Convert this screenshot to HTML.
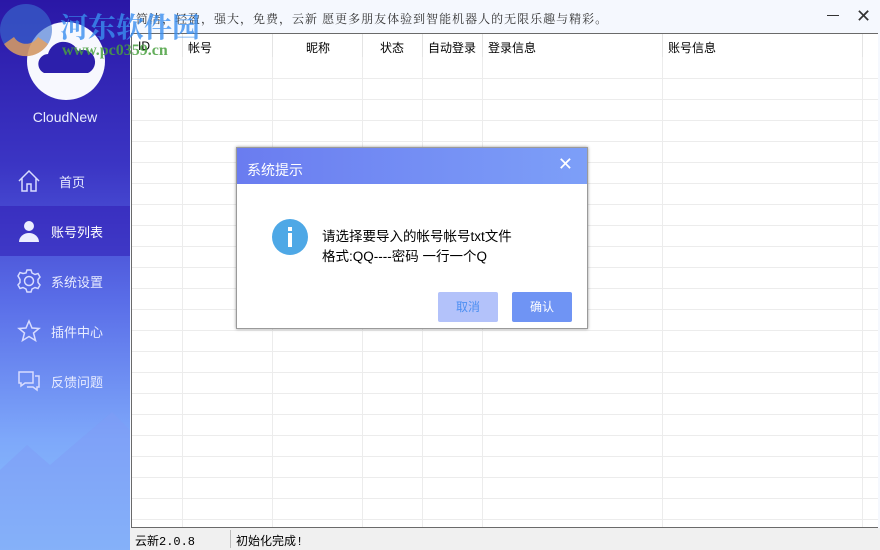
<!DOCTYPE html>
<html><head><meta charset="utf-8"><style>
*{margin:0;padding:0;box-sizing:border-box}
body{width:880px;height:550px;overflow:hidden;position:relative;background:#f5f8fe;font-family:"Liberation Sans","Noto Sans CJK SC",sans-serif;font-size:12px;color:#000}
.side{position:absolute;left:0;top:0;width:130px;height:550px;background:linear-gradient(#2a17a6 0%,#3b35c4 30%,#5a6ee8 55%,#7ea8fa 80%,#8ac6fd 100%);overflow:hidden}
.it{position:absolute;left:0;width:130px;height:50px;color:#e8ecff;font-size:13px}
.it span{position:absolute;left:51px;top:16px}
.it svg{position:absolute;left:17px;top:13px}
.sel{background:rgba(50,30,180,0.55)}
.top{position:absolute;left:130px;top:0;width:750px;height:33px;background:#f5f8fe}
.grid{position:absolute;left:131px;top:33px;width:747px;height:495px;border:1px solid #6a6a6a;border-right:none;background:#fff}
.hl{position:absolute;left:0;right:0;height:1px;background:#ececec}
.vl{position:absolute;top:0;bottom:0;width:1px;background:#ececec}
.hd{position:absolute;top:5px;font-size:12px}
.status{position:absolute;left:130px;top:528px;width:750px;height:22px;background:#f0f0f0;font-family:"Liberation Mono","Noto Sans CJK SC",monospace;font-size:12px}
.dlg{position:absolute;left:236px;top:147px;width:352px;height:182px;background:#fff;border:1px solid #9a9a9a;box-shadow:0 0 3px rgba(0,0,0,0.4)}
.dh{height:36px;background:linear-gradient(90deg,#6a7cf0,#7d9ff8);color:#fff;font-size:14px;padding:12px 0 0 10px}
.btn{position:absolute;top:144px;width:60px;height:30px;border-radius:2px;font-size:12px;text-align:center;line-height:30px}
</style></head><body>
<div class="side">
  <svg width="130" height="140" style="position:absolute;left:0;top:0">
    <circle cx="66" cy="61" r="39" fill="#f7f8fe"/>
    <path d="M44 73 a10 10 0 0 1 4 -19 a16 16 0 0 1 30 -3 a11 11 0 0 1 10 22 z" fill="#2c1fab"/>
    <circle cx="26" cy="30" r="26" fill="#3a6fd0" opacity="0.6"/>
    <path d="M4 44 a26 26 0 0 0 44 0 l-10 -7 a14 14 0 0 1 -24 0z" fill="#f0a050" opacity="0.75"/>
  </svg>
  <div style="position:absolute;left:0;width:130px;top:109px;text-align:center;color:#e8ecff;font-size:14px">CloudNew</div>
  <div class="it" style="top:156px"><svg width="24" height="24" viewBox="0 0 24 24" fill="none" stroke="#d8dcff" stroke-width="1.5"><path d="M2 12 L12 2 L22 12 M5 9 V22 H10 V15 H14 V22 H19 V9"/></svg><span style="left:59px">首页</span></div>
  <div class="it sel" style="top:206px"><svg width="24" height="24" viewBox="0 0 24 24"><circle cx="12" cy="7" r="5" fill="#eceeff"/><path d="M2 23 a10 9 0 0 1 20 0z" fill="#eceeff"/></svg><span style="color:#fff">账号列表</span></div>
  <div class="it" style="top:256px"><svg width="24" height="24" viewBox="0 0 24 24" fill="none" stroke="#d8dcff" stroke-width="1.5"><path d="M10 1h4l1 3 3 1.5 3-1 2 3.5-2 2.5v3l2 2.5-2 3.5-3-1-3 1.5-1 3h-4l-1-3-3-1.5-3 1-2-3.5 2-2.5v-3L1 7l2-3.5 3 1L9 4z"/><circle cx="12" cy="12" r="4.5"/></svg><span>系统设置</span></div>
  <div class="it" style="top:306px"><svg width="24" height="24" viewBox="0 0 24 24" fill="none" stroke="#d8dcff" stroke-width="1.5"><path d="M12 2l3 7 7 .5-5.5 4.5 2 7.5L12 17.5 5.5 21.5l2-7.5L2 9.5 9 9z"/></svg><span>插件中心</span></div>
  <div class="it" style="top:356px"><svg width="24" height="24" viewBox="0 0 24 24" fill="none" stroke="#d8dcff" stroke-width="1.5"><path d="M2 3h14v11H8l-4 3v-3H2z M18 7h4v11h-2v3l-4-3h-6"/></svg><span>反馈问题</span></div>
  <svg width="130" height="200" style="position:absolute;left:0;top:350px"><path d="M0 120 L27 95 L50 115 L112 62 L130 80 V200 H0z" fill="#7f9cf6" opacity="0.5"/></svg>
</div>
<div class="top">
  <div style="position:absolute;left:6px;top:10px;font-size:12px;color:#333;font-family:'Noto Serif CJK SC',serif;letter-spacing:1px">简洁，轻盈，强大，免费，云新 愿更多朋友体验到智能机器人的无限乐趣与精彩。</div>
  <div style="position:absolute;left:697px;top:15px;width:12px;height:1px;background:#333"></div>
  <div style="position:absolute;left:726px;top:6px;font-size:18px;color:#333">✕</div>
</div>
<div class="grid">
  <div class="vl" style="left:50px"></div><div class="vl" style="left:140px"></div><div class="vl" style="left:230px"></div><div class="vl" style="left:290px"></div><div class="vl" style="left:350px"></div><div class="vl" style="left:530px"></div><div class="vl" style="left:730px"></div>
  <div style="position:absolute;left:0;right:0;top:0;height:23px;background:#fff"></div>
  <div class="vl" style="left:50px;height:23px;background:#e4e4e4"></div><div class="vl" style="left:140px;height:23px;background:#e4e4e4"></div><div class="vl" style="left:230px;height:23px;background:#e4e4e4"></div><div class="vl" style="left:290px;height:23px;background:#e4e4e4"></div><div class="vl" style="left:350px;height:23px;background:#e4e4e4"></div><div class="vl" style="left:530px;height:23px;background:#e4e4e4"></div><div class="vl" style="left:730px;height:23px;background:#e4e4e4"></div>
  <div class="hd" style="left:6px">ID</div><div class="hd" style="left:56px">帐号</div><div class="hd" style="left:174px">昵称</div><div class="hd" style="left:248px">状态</div><div class="hd" style="left:296px">自动登录</div><div class="hd" style="left:356px">登录信息</div><div class="hd" style="left:536px">账号信息</div>
  <div class="hl" style="top:44px"></div><div class="hl" style="top:65px"></div><div class="hl" style="top:86px"></div><div class="hl" style="top:107px"></div><div class="hl" style="top:128px"></div><div class="hl" style="top:149px"></div><div class="hl" style="top:170px"></div><div class="hl" style="top:191px"></div><div class="hl" style="top:212px"></div><div class="hl" style="top:233px"></div><div class="hl" style="top:254px"></div><div class="hl" style="top:275px"></div><div class="hl" style="top:296px"></div><div class="hl" style="top:317px"></div><div class="hl" style="top:338px"></div><div class="hl" style="top:359px"></div><div class="hl" style="top:380px"></div><div class="hl" style="top:401px"></div><div class="hl" style="top:422px"></div><div class="hl" style="top:443px"></div><div class="hl" style="top:464px"></div><div class="hl" style="top:485px"></div>
</div>
<div class="status"><span style="position:absolute;left:5px;top:4px">云新2.0.8</span><div style="position:absolute;left:100px;top:2px;width:1px;height:18px;background:#bbb"></div><span style="position:absolute;left:106px;top:4px">初始化完成!</span></div>
<div class="dlg">
  <div class="dh">系统提示</div>
  <div style="position:absolute;right:14px;top:6px;color:#fff;font-size:18px">✕</div>
  <svg width="38" height="38" style="position:absolute;left:34px;top:70px"><circle cx="19" cy="19" r="18" fill="#4ea8e6"/><rect x="17" y="15" width="4" height="14" fill="#fff"/><rect x="17" y="9" width="4" height="4" fill="#fff"/></svg>
  <div style="position:absolute;left:85px;top:79px;font-size:13.5px;line-height:20px">请选择要导入的帐号帐号txt文件<br>格式:QQ----密码 一行一个Q</div>
  <div class="btn" style="left:201px;background:#b3c2fa;color:#4b8ef2">取消</div>
  <div class="btn" style="left:275px;background:#6f94f4;color:#fff">确认</div>
</div>
<div style="position:absolute;z-index:5;left:60px;top:6px;font-size:28px;font-weight:bold;color:#3a8ff0;opacity:0.8;font-family:'Noto Serif CJK SC',serif">河东软件园</div>
<div style="position:absolute;z-index:5;left:62px;top:42px;font-size:16px;font-weight:bold;color:#4aa040;opacity:0.85;font-family:'Liberation Serif',serif">www.pc0359.cn</div>
</body></html>
